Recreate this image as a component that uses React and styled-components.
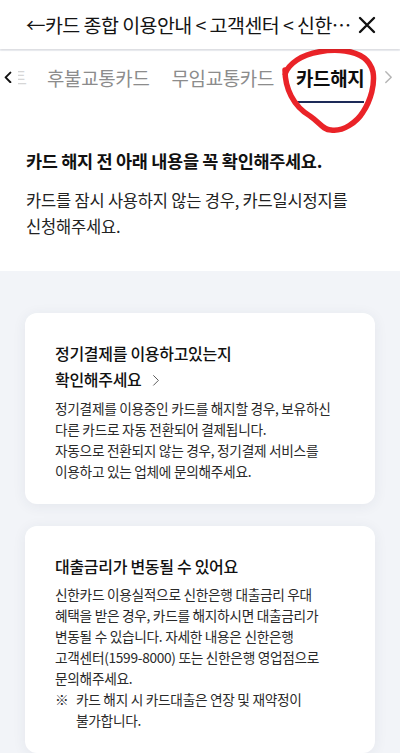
import React from 'react';
import styled, { createGlobalStyle } from 'styled-components';

const GlobalStyle = createGlobalStyle`
  html, body {
    margin: 0;
    padding: 0;
    background: #ffffff;
    font-family: "Noto Sans CJK KR", "Noto Sans", sans-serif;
    color: #111;
  }
`;

const Page = styled.div`
  width: 400px;
  height: 753px;
  overflow: hidden;
  background: #f2f4f8;
`;

const Header = styled.header`
  height: 49px;
  display: flex;
  align-items: center;
  padding: 0 22px 0 26px;
  background: #fff;
  box-shadow: 0 1px 2px rgba(0, 0, 0, 0.12);
  position: relative;
  z-index: 2;
`;

const Title = styled.h1`
  margin: 0;
  font-size: 19.5px;
  font-weight: 400;
  letter-spacing: -0.55px;
  white-space: nowrap;
  color: #141414;
`;

const CloseButton = styled.button`
  margin-left: auto;
  flex: none;
  width: 22px;
  height: 22px;
  padding: 0;
  border: 0;
  background: none;
  display: flex;
  align-items: center;
  justify-content: center;
`;

const Intro = styled.section`
  background: #fff;
  padding-bottom: 32px;
`;

const TabBar = styled.nav`
  height: 52px;
  margin-top: 2px;
  display: flex;
  align-items: stretch;
  position: relative;
`;

const Chevron = styled.span`
  display: flex;
  align-items: center;
  justify-content: center;
  width: ${(p) => p.width}px;
  flex: none;
  margin-left: ${(p) => (p.end ? 'auto' : '0')};
`;

const Faded = styled.span`
  width: 9px;
  margin-left: 2px;
  overflow: hidden;
  display: flex;
  align-items: center;
  justify-content: flex-end;
  font-size: 18.5px;
  color: #d6d6d6;
  white-space: nowrap;
`;

const Tabs = styled.div`
  display: flex;
  gap: 22px;
  margin-left: 20px;
`;

const Tab = styled.span`
  display: flex;
  align-items: center;
  padding-top: 2px;
  font-size: 18.9px;
  letter-spacing: -0.3px;
  white-space: nowrap;
  font-weight: ${(p) => (p.active ? 700 : 400)};
  color: ${(p) => (p.active ? '#0d0d0d' : '#8c8c8c')};
  border-bottom: 2px solid ${(p) => (p.active ? '#1d2a58' : 'transparent')};
`;

const Scribble = styled.svg`
  position: absolute;
  left: 263px;
  top: -3px;
  pointer-events: none;
`;

const Heading = styled.h2`
  margin: 45px 0 0;
  padding: 0 26px;
  font-size: 17.5px;
  font-weight: 700;
  letter-spacing: -0.3px;
  line-height: 26px;
  color: #111;
`;

const Lead = styled.p`
  margin: 13px 0 0;
  padding: 0 26px;
  font-size: 16.5px;
  line-height: 26px;
  letter-spacing: -0.2px;
  color: #222;
`;

const CardList = styled.section`
  display: flex;
  flex-direction: column;
  gap: 22px;
  padding: 42px 25px 0;
`;

const Card = styled.article`
  background: #fff;
  border-radius: 12px;
  box-shadow: 0 2px 14px rgba(40, 50, 90, 0.07);
  padding: 27px 30px 22px;
`;

const CardTitle = styled.h3`
  margin: 0 0 5px;
  font-size: 16px;
  font-weight: 500;
  line-height: 26px;
  letter-spacing: -0.3px;
  color: #111;
`;

const Arrow = styled.span`
  display: inline-block;
  margin-left: 10px;
  vertical-align: -1px;
`;

const Body = styled.p`
  margin: 0;
  font-size: 13.7px;
  line-height: 21px;
  letter-spacing: -0.3px;
  color: #2a2a2a;
`;

const Note = styled.p`
  margin: 0;
  display: flex;
  font-size: 13.7px;
  line-height: 21px;
  letter-spacing: -0.3px;
  color: #2a2a2a;

  & > span:first-child {
    flex: none;
    width: 21px;
  }
`;

const ChevronSvg = ({ dir, size, stroke, weight }) => (
  <svg width={size} height={size * 1.6} viewBox="0 0 10 16" fill="none">
    <path
      d={dir === 'left' ? 'M8 2 L2 8 L8 14' : 'M2 2 L8 8 L2 14'}
      stroke={stroke}
      strokeWidth={weight}
      strokeLinecap="round"
      strokeLinejoin="round"
    />
  </svg>
);

const App = () => (
  <Page>
    <GlobalStyle />
    <Header>
      <Title>←카드 종합 이용안내 &lt; 고객센터 &lt; 신한…</Title>
      <CloseButton aria-label="닫기">
        <svg width="18" height="18" viewBox="0 0 18 18">
          <path d="M2 2 L16 16 M16 2 L2 16" stroke="#111" strokeWidth="2.4" strokeLinecap="round" />
        </svg>
      </CloseButton>
    </Header>

    <Intro>
      <TabBar>
        <Chevron width={16}>
          <ChevronSvg dir="left" size={8} stroke="#111" weight={2.4} />
        </Chevron>
        <Faded>트</Faded>
        <Tabs>
          <Tab>후불교통카드</Tab>
          <Tab>무임교통카드</Tab>
          <Tab active>카드해지</Tab>
        </Tabs>
        <Chevron width={24} end>
          <ChevronSvg dir="right" size={9} stroke="#b5b5b5" weight={1.6} />
        </Chevron>
        <Scribble width="130" height="90" viewBox="0 0 130 90">
          <path
            d="M22 22 C22 40 30 58 47 68 C56 74 60 82 68 82 C80 84 94 74 100 64 C108 52 112 36 110 24 C107 12 98 5 82 3 C66 1 46 4 34 12 C28 16 24 20 22 26"
            fill="none"
            stroke="#ea2328"
            strokeWidth="5.5"
            strokeLinecap="round"
            strokeLinejoin="round"
          />
        </Scribble>
      </TabBar>

      <Heading>카드 해지 전 아래 내용을 꼭 확인해주세요.</Heading>
      <Lead>
        카드를 잠시 사용하지 않는 경우, 카드일시정지를
        <br />
        신청해주세요.
      </Lead>
    </Intro>

    <CardList>
      <Card>
        <CardTitle>
          정기결제를 이용하고있는지
          <br />
          확인해주세요
          <Arrow>
            <ChevronSvg dir="right" size={8} stroke="#555" weight={1.2} />
          </Arrow>
        </CardTitle>
        <Body>
          정기결제를 이용중인 카드를 해지할 경우, 보유하신
          <br />
          다른 카드로 자동 전환되어 결제됩니다.
          <br />
          자동으로 전환되지 않는 경우, 정기결제 서비스를
          <br />
          이용하고 있는 업체에 문의해주세요.
        </Body>
      </Card>

      <Card>
        <CardTitle>대출금리가 변동될 수 있어요</CardTitle>
        <Body>
          신한카드 이용실적으로 신한은행 대출금리 우대
          <br />
          혜택을 받은 경우, 카드를 해지하시면 대출금리가
          <br />
          변동될 수 있습니다. 자세한 내용은 신한은행
          <br />
          고객센터(1599-8000) 또는 신한은행 영업점으로
          <br />
          문의해주세요.
        </Body>
        <Note>
          <span>※</span>
          <span>
            카드 해지 시 카드대출은 연장 및 재약정이
            <br />
            불가합니다.
          </span>
        </Note>
      </Card>
    </CardList>
  </Page>
);

export default App;
